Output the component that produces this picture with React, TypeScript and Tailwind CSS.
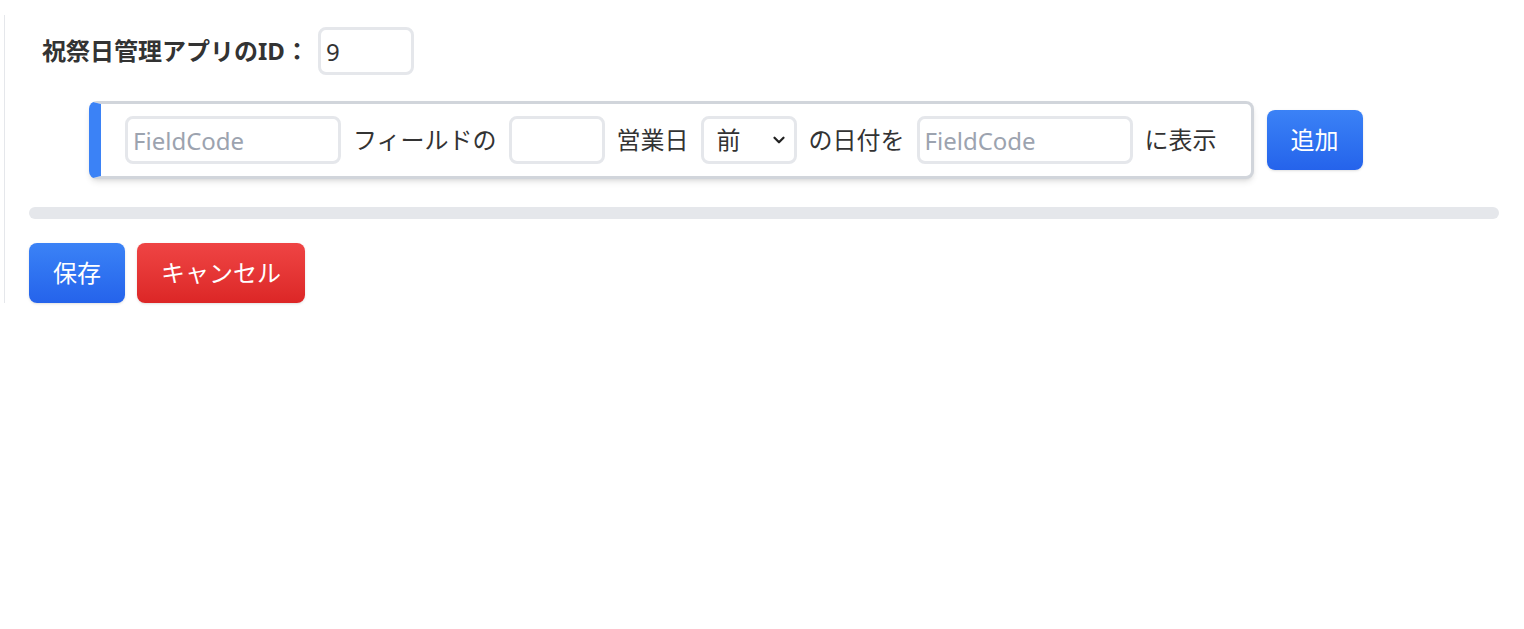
import { ChevronDown } from 'lucide-react';

const fieldClass =
  'h-12 rounded-lg border-[3px] border-[#e5e7eb] bg-white px-[5px] text-2xl text-[#333] placeholder:text-[#9ca3af] outline-none';

const HolidaySettings = () => {
  return (
    <div
      className="h-[629px] border-b border-[#e2e4e7] bg-white text-[#333]"
      style={{ fontFamily: '"Noto Sans", "Noto Sans CJK JP", sans-serif' }}
    >
      <div className="ml-1 mt-[15px] border-l border-[#e5e7eb] pl-6 pr-[25px] pt-3">
        {/* App ID */}
        <div className="flex items-center pl-[13px]">
          <label className="mr-[9px] text-2xl font-bold leading-8">祝祭日管理アプリのID：</label>
          <input className={`${fieldClass} w-24`} defaultValue="9" />
        </div>

        {/* Rule row */}
        <div className="ml-[60px] mt-[26px] flex items-center gap-[13px]">
          <div className="flex items-center gap-3 rounded-lg border-[3px] border-l-[12px] border-[#d1d5db] border-l-[#3b82f6] bg-white py-3 pl-6 pr-[34px] shadow-md">
            <input className={`${fieldClass} w-[216px]`} placeholder="FieldCode" />
            <span className="text-2xl leading-8">フィールドの</span>
            <input className={`${fieldClass} w-24`} />
            <span className="text-2xl leading-8">営業日</span>
            <div className="relative">
              <select className={`${fieldClass} w-24 appearance-none pl-[13px]`} defaultValue="前">
                <option>前</option>
                <option>後</option>
              </select>
              <ChevronDown
                className="pointer-events-none absolute right-[9px] top-1/2 h-[18px] w-[18px] -translate-y-1/2 text-[#222]"
                strokeWidth={3}
              />
            </div>
            <span className="text-2xl leading-8">の日付を</span>
            <input className={`${fieldClass} w-[216px]`} placeholder="FieldCode" />
            <span className="text-2xl leading-8">に表示</span>
          </div>
          <button className="h-[60px] w-24 rounded-lg bg-gradient-to-b from-[#3b82f6] to-[#2563eb] text-2xl text-white shadow-sm">
            追加
          </button>
        </div>

        {/* Divider bar */}
        <div className="mt-7 h-3 rounded-full bg-[#e5e7eb]" />

        {/* Actions */}
        <div className="mt-6 flex gap-3">
          <button className="h-[60px] w-24 rounded-lg bg-gradient-to-b from-[#3b82f6] to-[#2563eb] text-2xl text-white shadow-sm">
            保存
          </button>
          <button className="h-[60px] w-[168px] rounded-lg bg-gradient-to-b from-[#ef4444] to-[#dc2626] text-2xl text-white shadow-sm">
            キャンセル
          </button>
        </div>
      </div>
    </div>
  );
};

export default HolidaySettings;
